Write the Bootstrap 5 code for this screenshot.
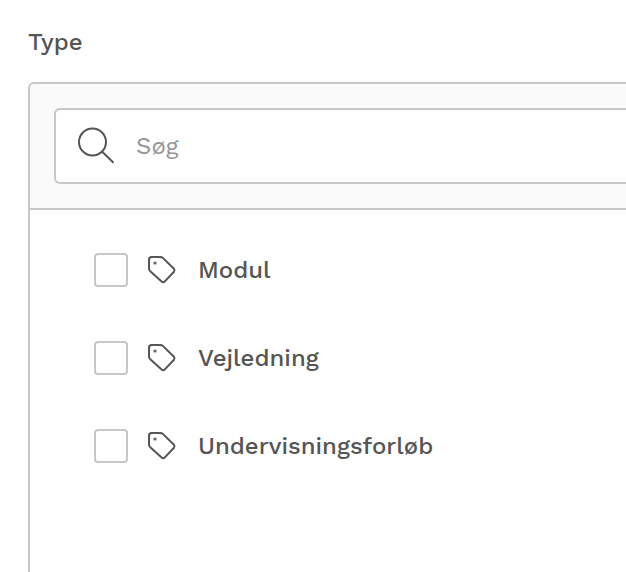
<!DOCTYPE html>
<html lang="da">
<head>
<meta charset="utf-8">
<meta name="viewport" content="width=device-width, initial-scale=1">
<title>Type</title>
<link href="https://cdn.jsdelivr.net/npm/bootstrap@5.3.0/dist/css/bootstrap.min.css" rel="stylesheet">
<style>
  :root { --line: #c6c7c7; --ink: #555; }
  body { font-family: "Work Sans", "Open Sans", "Noto Sans", sans-serif; font-size: 24px; font-weight: 500; line-height: 32px; color: var(--ink); background: #fff; }
  .filter { padding: 26px 0 0 28px; }
  .filter-title { font-size: 24px; line-height: 32px; font-weight: 500; margin-bottom: 24px; }
  .filter-panel { border: 2px solid var(--line); border-width: 2px 0 0 2px; border-top-left-radius: 6px; }
  .filter-head { background: #fafafa; border-bottom: 2px solid var(--line); padding: 24px 0 24px 24px; border-top-left-radius: 4px; }
  .search-box { height: 76px; background: #fff; border: 2px solid var(--line); border-right: 0; border-radius: 6px 0 0 6px; padding-left: 20px; gap: 20px; }
  .search-box .form-control { font: inherit; font-weight: 400; color: var(--ink); }
  .search-box .form-control::placeholder { color: #969696; opacity: 1; }
  .search-box .form-control:focus { box-shadow: none; }
  .options { padding: 16px 24px 16px 64px; }
  .option { height: 88px; }
  .option .form-check-input { width: 34px; height: 34px; margin: 0 18px 0 0; border: 2px solid var(--line); border-radius: 4px; }
  .option-label { gap: 20px; }
  svg { fill: none; stroke: var(--ink); stroke-linecap: round; stroke-linejoin: round; }
</style>
</head>
<body>
<svg class="d-none" aria-hidden="true">
  <symbol id="tag" viewBox="0 0 32 32"><path d="M5.500 3H14.500Q15.800 3 16.800 3.900L28 14.800Q29.300 16.300 28 17.800L18.600 27.600Q17.100 29 15.600 27.600L4 16.900Q3 15.900 3 14.500V5.500Q3 3 5.500 3Z"/><circle cx="9" cy="9" r=".6"/></symbol>
</svg>
<main class="filter d-flex flex-column min-vh-100">
  <h2 class="filter-title">Type</h2>
  <section class="filter-panel flex-grow-1">
    <div class="filter-head">
      <div class="search-box d-flex align-items-center">
        <label for="search" class="d-flex flex-shrink-0" aria-label="Søg">
          <svg width="40" height="40" viewBox="0 0 40 40" stroke-width="2"><circle cx="16.500" cy="16" r="13.500"/><path d="M26.200 25.700 37 36.300"/></svg>
        </label>
        <input id="search" type="search" class="form-control border-0 p-0 bg-transparent" placeholder="Søg">
      </div>
    </div>
    <ul class="options list-unstyled mb-0">
      <li class="option d-flex align-items-center">
        <input class="form-check-input flex-shrink-0" type="checkbox" id="modul">
        <label class="option-label d-flex align-items-center" for="modul">
          <svg width="32" height="32" stroke-width="2"><use href="#tag"/></svg>
          <span>Modul</span>
        </label>
      </li>
      <li class="option d-flex align-items-center">
        <input class="form-check-input flex-shrink-0" type="checkbox" id="vejledning">
        <label class="option-label d-flex align-items-center" for="vejledning">
          <svg width="32" height="32" stroke-width="2"><use href="#tag"/></svg>
          <span>Vejledning</span>
        </label>
      </li>
      <li class="option d-flex align-items-center">
        <input class="form-check-input flex-shrink-0" type="checkbox" id="forloeb">
        <label class="option-label d-flex align-items-center" for="forloeb">
          <svg width="32" height="32" stroke-width="2"><use href="#tag"/></svg>
          <span>Undervisningsforløb</span>
        </label>
      </li>
    </ul>
  </section>
</main>
<script src="https://cdn.jsdelivr.net/npm/bootstrap@5.3.0/dist/js/bootstrap.bundle.min.js"></script>
</body>
</html>
